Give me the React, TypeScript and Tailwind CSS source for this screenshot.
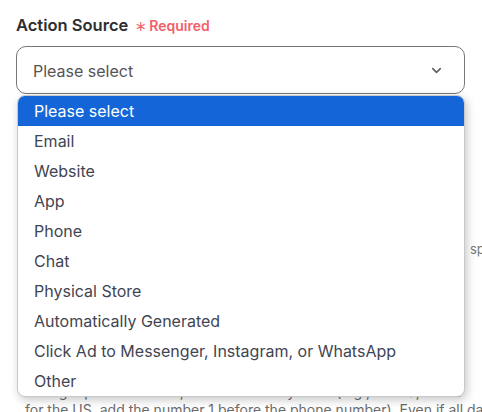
import { ChevronDown } from "lucide-react";

const options = [
  "Please select",
  "Email",
  "Website",
  "App",
  "Phone",
  "Chat",
  "Physical Store",
  "Automatically Generated",
  "Click Ad to Messenger, Instagram, or WhatsApp",
  "Other",
];

export default function App() {
  return (
    <div className="relative w-[482px] h-[412px] overflow-hidden bg-white font-['Inter',sans-serif]">
      <div className="pl-4 pr-[17px] pt-[13px]">
        {/* Label */}
        <div className="flex items-center h-[24px]">
          <span className="text-[16.5px] font-semibold text-[#2d2e30]">Action Source</span>
          <span className="ml-[7px] text-[22px] leading-none text-[#f25f6b] mt-[9px] font-light">*</span>
          <span className="ml-[3px] text-[14px] font-semibold text-[#f25f6b]">Required</span>
        </div>

        {/* Select */}
        <div className="mt-[9px] h-[48px] flex items-center justify-between rounded-[10px] border border-[#777] pl-4 pr-[20px] bg-white">
          <span className="text-[16px] text-[#555] mt-[2px]">Please select</span>
          <ChevronDown size={15} strokeWidth={2.5} className="text-[#5e5e5e] mt-[1px]" />
        </div>

        {/* Underlying form text */}
        <div className="mt-[146px] text-[13px] text-[#777] whitespace-nowrap pl-[454px]">
          space
        </div>
        <div className="mt-[123px] pl-[9px] text-[14px] leading-[18px] text-[#6b6b6b] whitespace-nowrap">
          <p>the right phone number, with the country code (e.g., for US, add a</p>
          <p>for the US, add the number 1 before the phone number). Even if all data</p>
        </div>
      </div>

      {/* Dropdown list */}
      <ul className="absolute left-[17px] top-[95px] w-[448px] rounded-[8px] bg-white border border-[#c9c9c9] shadow-[2px_3px_10px_rgba(0,0,0,0.22)] overflow-hidden">
        {options.map((o, i) => (
          <li
            key={o}
            className={
              i === 0
                ? "h-[30px] flex items-center pl-4 text-[16px] bg-[#1466d8] text-white"
                : "h-[30px] flex items-center pl-4 text-[16px] text-[#3f4552]"
            }
          >
            {o}
          </li>
        ))}
      </ul>
    </div>
  );
}
